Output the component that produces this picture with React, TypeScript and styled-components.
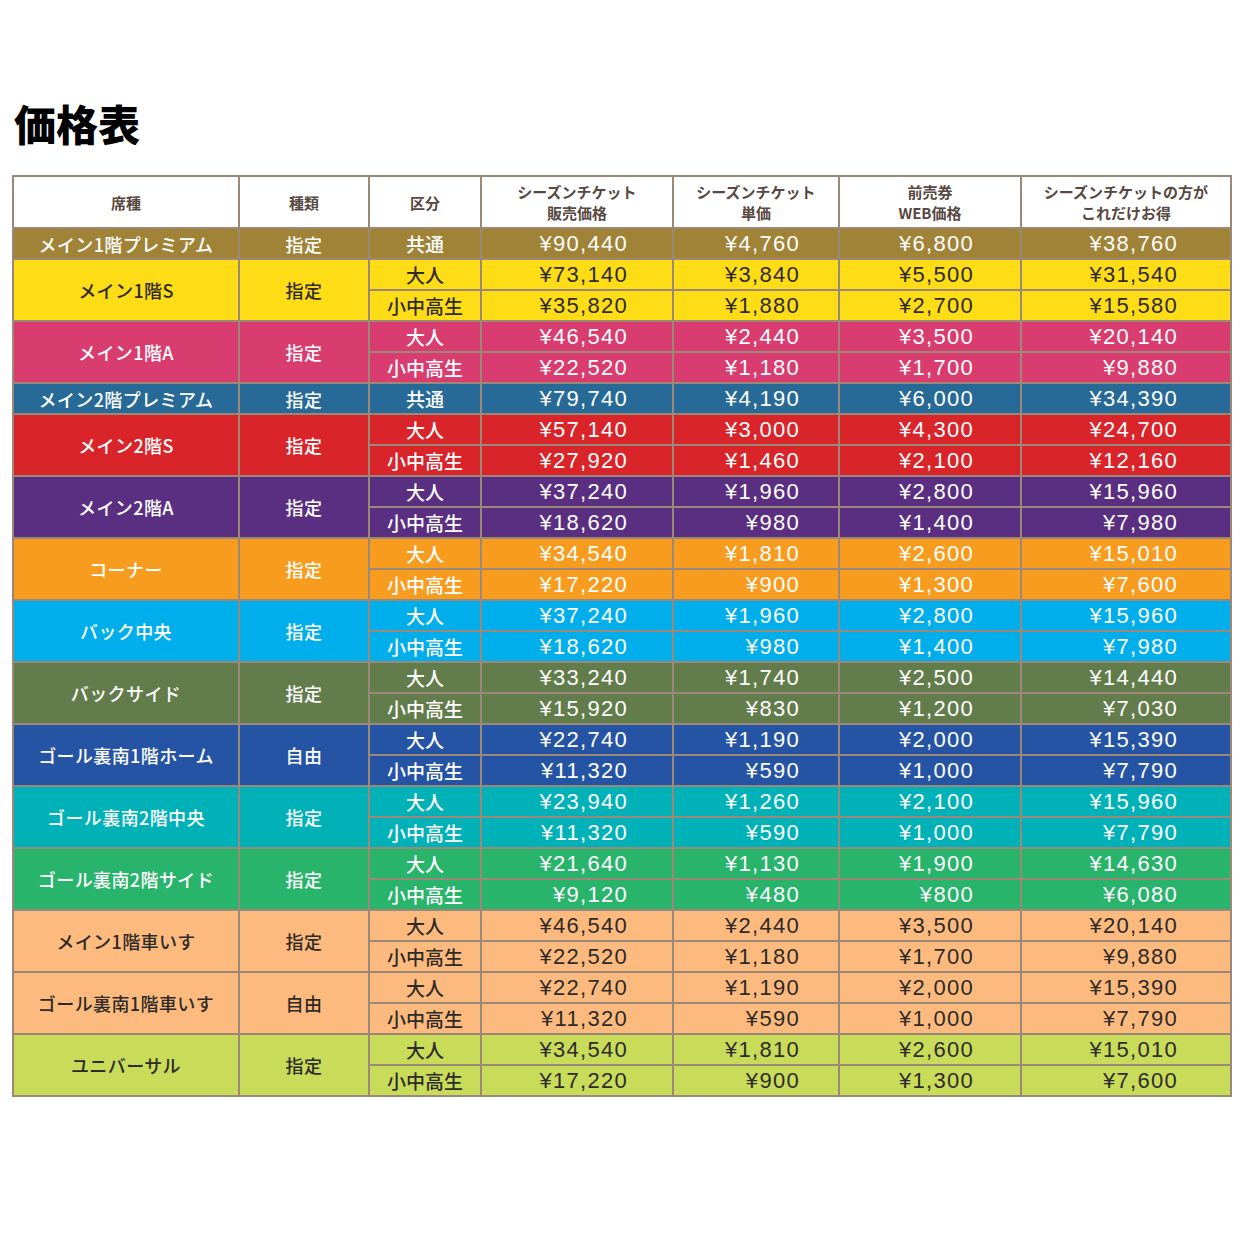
import React from 'react';
import styled, { createGlobalStyle } from 'styled-components';

const GlobalStyle = createGlobalStyle`
  body {
    margin: 0;
    background: #ffffff;
    font-family: 'Liberation Sans', 'Noto Sans CJK JP', sans-serif;
  }
`;

type Row = { kubun: string; prices: [string, string, string, string] };
type Group = { seat: string; kind: string; bg: string; fg: string; rows: Row[] };

const WHITE = '#ffffff';
const DARK = '#2e2a28';

const GROUPS: Group[] = [
  { seat: 'メイン1階プレミアム', kind: '指定', bg: '#a18337', fg: WHITE, rows: [
    { kubun: '共通', prices: ['¥90,440', '¥4,760', '¥6,800', '¥38,760'] },
  ] },
  { seat: 'メイン1階S', kind: '指定', bg: '#fedd17', fg: DARK, rows: [
    { kubun: '大人', prices: ['¥73,140', '¥3,840', '¥5,500', '¥31,540'] },
    { kubun: '小中高生', prices: ['¥35,820', '¥1,880', '¥2,700', '¥15,580'] },
  ] },
  { seat: 'メイン1階A', kind: '指定', bg: '#d93c6e', fg: WHITE, rows: [
    { kubun: '大人', prices: ['¥46,540', '¥2,440', '¥3,500', '¥20,140'] },
    { kubun: '小中高生', prices: ['¥22,520', '¥1,180', '¥1,700', '¥9,880'] },
  ] },
  { seat: 'メイン2階プレミアム', kind: '指定', bg: '#276a98', fg: WHITE, rows: [
    { kubun: '共通', prices: ['¥79,740', '¥4,190', '¥6,000', '¥34,390'] },
  ] },
  { seat: 'メイン2階S', kind: '指定', bg: '#d9242a', fg: WHITE, rows: [
    { kubun: '大人', prices: ['¥57,140', '¥3,000', '¥4,300', '¥24,700'] },
    { kubun: '小中高生', prices: ['¥27,920', '¥1,460', '¥2,100', '¥12,160'] },
  ] },
  { seat: 'メイン2階A', kind: '指定', bg: '#5a2f81', fg: WHITE, rows: [
    { kubun: '大人', prices: ['¥37,240', '¥1,960', '¥2,800', '¥15,960'] },
    { kubun: '小中高生', prices: ['¥18,620', '¥980', '¥1,400', '¥7,980'] },
  ] },
  { seat: 'コーナー', kind: '指定', bg: '#f79c1e', fg: WHITE, rows: [
    { kubun: '大人', prices: ['¥34,540', '¥1,810', '¥2,600', '¥15,010'] },
    { kubun: '小中高生', prices: ['¥17,220', '¥900', '¥1,300', '¥7,600'] },
  ] },
  { seat: 'バック中央', kind: '指定', bg: '#00aeeb', fg: WHITE, rows: [
    { kubun: '大人', prices: ['¥37,240', '¥1,960', '¥2,800', '¥15,960'] },
    { kubun: '小中高生', prices: ['¥18,620', '¥980', '¥1,400', '¥7,980'] },
  ] },
  { seat: 'バックサイド', kind: '指定', bg: '#627d4b', fg: WHITE, rows: [
    { kubun: '大人', prices: ['¥33,240', '¥1,740', '¥2,500', '¥14,440'] },
    { kubun: '小中高生', prices: ['¥15,920', '¥830', '¥1,200', '¥7,030'] },
  ] },
  { seat: 'ゴール裏南1階ホーム', kind: '自由', bg: '#2654a5', fg: WHITE, rows: [
    { kubun: '大人', prices: ['¥22,740', '¥1,190', '¥2,000', '¥15,390'] },
    { kubun: '小中高生', prices: ['¥11,320', '¥590', '¥1,000', '¥7,790'] },
  ] },
  { seat: 'ゴール裏南2階中央', kind: '指定', bg: '#00b2b8', fg: WHITE, rows: [
    { kubun: '大人', prices: ['¥23,940', '¥1,260', '¥2,100', '¥15,960'] },
    { kubun: '小中高生', prices: ['¥11,320', '¥590', '¥1,000', '¥7,790'] },
  ] },
  { seat: 'ゴール裏南2階サイド', kind: '指定', bg: '#29b46c', fg: WHITE, rows: [
    { kubun: '大人', prices: ['¥21,640', '¥1,130', '¥1,900', '¥14,630'] },
    { kubun: '小中高生', prices: ['¥9,120', '¥480', '¥800', '¥6,080'] },
  ] },
  { seat: 'メイン1階車いす', kind: '指定', bg: '#fdba7e', fg: DARK, rows: [
    { kubun: '大人', prices: ['¥46,540', '¥2,440', '¥3,500', '¥20,140'] },
    { kubun: '小中高生', prices: ['¥22,520', '¥1,180', '¥1,700', '¥9,880'] },
  ] },
  { seat: 'ゴール裏南1階車いす', kind: '自由', bg: '#fdba7e', fg: DARK, rows: [
    { kubun: '大人', prices: ['¥22,740', '¥1,190', '¥2,000', '¥15,390'] },
    { kubun: '小中高生', prices: ['¥11,320', '¥590', '¥1,000', '¥7,790'] },
  ] },
  { seat: 'ユニバーサル', kind: '指定', bg: '#c8dc5a', fg: DARK, rows: [
    { kubun: '大人', prices: ['¥34,540', '¥1,810', '¥2,600', '¥15,010'] },
    { kubun: '小中高生', prices: ['¥17,220', '¥900', '¥1,300', '¥7,600'] },
  ] },
];

// right padding per price column, so the figures line up like the original
const PRICE_PAD = [44, 38, 46, 52];

const HEADERS: { label: string[]; width: number }[] = [
  { label: ['席種'], width: 226 },
  { label: ['種類'], width: 130 },
  { label: ['区分'], width: 112 },
  { label: ['シーズンチケット', '販売価格'], width: 192 },
  { label: ['シーズンチケット', '単価'], width: 166 },
  { label: ['前売券', 'WEB価格'], width: 182 },
  { label: ['シーズンチケットの方が', 'これだけお得'], width: 210 },
];

export default function App() {
  return (
    <Page>
      <GlobalStyle />
      <Title>価格表</Title>
      <PriceTable>
        <colgroup>
          {HEADERS.map((h, i) => (
            <col key={i} style={{ width: h.width }} />
          ))}
        </colgroup>
        <thead>
          <tr>
            {HEADERS.map((h, i) => (
              <HeadCell key={i}>
                {h.label.map((line, j) => (
                  <div key={j}>{line}</div>
                ))}
              </HeadCell>
            ))}
          </tr>
        </thead>
        <tbody>
          {GROUPS.map((g) =>
            g.rows.map((r, idx) => (
              <BodyRow key={g.seat + idx} $bg={g.bg} $fg={g.fg}>
                {idx === 0 && (
                  <>
                    <SeatCell rowSpan={g.rows.length}>{g.seat}</SeatCell>
                    <SeatCell rowSpan={g.rows.length}>{g.kind}</SeatCell>
                  </>
                )}
                <KubunCell>{r.kubun}</KubunCell>
                {r.prices.map((p, k) => (
                  <PriceCell key={k} $pad={PRICE_PAD[k]}>
                    {p}
                  </PriceCell>
                ))}
              </BodyRow>
            ))
          )}
        </tbody>
      </PriceTable>
    </Page>
  );
}

const Page = styled.div`
  padding: 95px 17px 120px 12px;
`;

const Title = styled.h1`
  margin: 0 0 24px 2px;
  font-family: 'Noto Sans CJK JP', sans-serif;
  font-size: 42px;
  font-weight: 900;
  line-height: 56px;
  color: #000000;
`;

const PriceTable = styled.table`
  width: 1218px;
  border-collapse: collapse;
  table-layout: fixed;
  border: 2px solid #9c8878;

  td,
  th {
    border: 2px solid #9c8878;
    padding: 0;
  }
`;

const HeadCell = styled.th`
  height: 50px;
  background: #ffffff;
  color: #574841;
  font-family: 'Noto Sans CJK JP', sans-serif;
  font-size: 15px;
  font-weight: 700;
  line-height: 21px;
  text-align: center;
  vertical-align: middle;
`;

const BodyRow = styled.tr<{ $bg: string; $fg: string }>`
  background: ${({ $bg }) => $bg};
  color: ${({ $fg }) => $fg};
`;

const SeatCell = styled.td`
  text-align: center;
  vertical-align: middle;
  font-family: 'Noto Sans CJK JP', sans-serif;
  font-size: 18px;
  font-weight: 500;
  line-height: 24px;
  letter-spacing: 0.4px;
  white-space: nowrap;
`;

const KubunCell = styled.td`
  height: 29px;
  text-align: center;
  font-family: 'Noto Sans CJK JP', sans-serif;
  font-size: 19px;
  font-weight: 500;
  line-height: 27px;
`;

const PriceCell = styled.td<{ $pad: number }>`
  text-align: right;
  padding-right: ${({ $pad }) => $pad}px !important;
  font-size: 22px;
  letter-spacing: 1.3px;
  line-height: 27px;
`;
